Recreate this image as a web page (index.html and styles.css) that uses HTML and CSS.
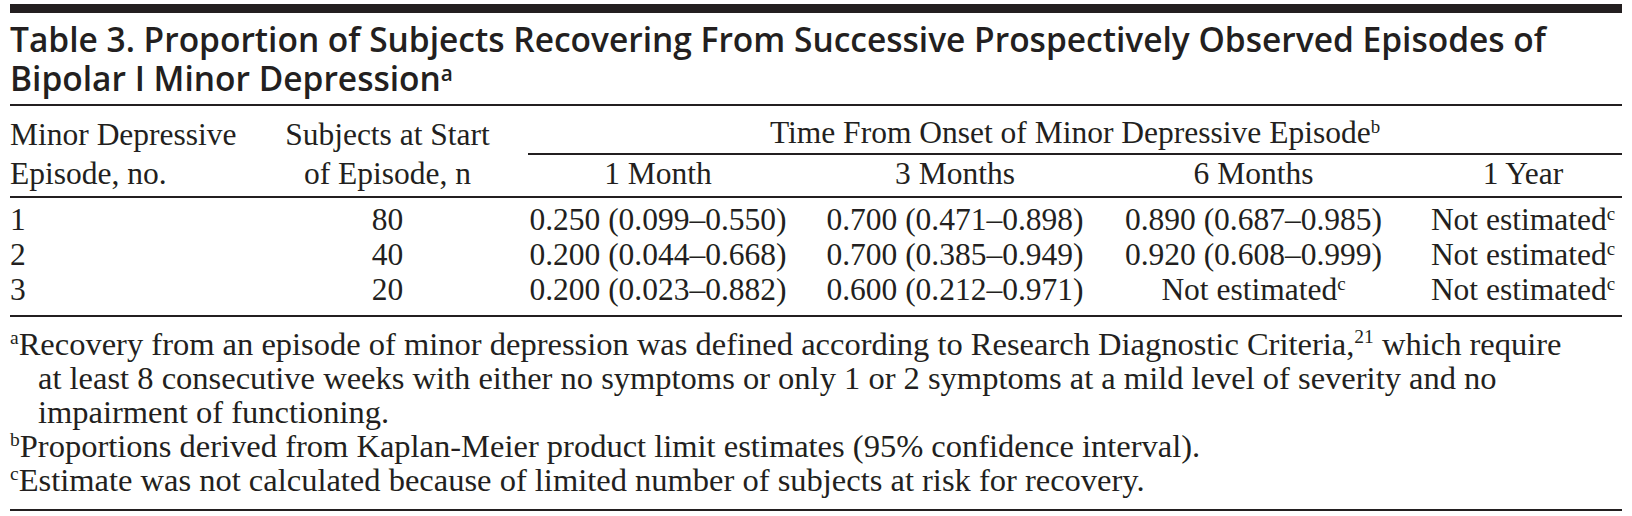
FILE: index.html
```html
<!DOCTYPE html>
<html lang="en">
<head>
<meta charset="utf-8">
<title>Table 3</title>
<link rel="stylesheet" href="styles.css">
</head>
<body>
<div class="page">
  <div class="topbar"></div>
  <h1 class="title">Table 3. Proportion of Subjects Recovering From Successive Prospectively Observed Episodes of<br>Bipolar I Minor Depression<sup class="tsup">a</sup></h1>
  <table class="data">
    <colgroup>
      <col class="w1"><col class="w2"><col class="w3"><col class="w4"><col class="w5"><col class="w6">
    </colgroup>
    <thead>
      <tr>
        <th rowspan="2" class="left hdr2">Minor Depressive<br>Episode, no.</th>
        <th rowspan="2" class="hdr2">Subjects at Start<br>of Episode, n</th>
        <th colspan="4" class="spancell"><div class="spanner">Time From Onset of Minor Depressive Episode<sup class="sup">b</sup></div></th>
      </tr>
      <tr class="sub">
        <th>1 Month</th>
        <th>3 Months</th>
        <th>6 Months</th>
        <th class="last">1 Year</th>
      </tr>
    </thead>
    <tbody>
      <tr class="first">
        <td class="left">1</td><td>80</td><td>0.250 (0.099–0.550)</td><td>0.700 (0.471–0.898)</td><td>0.890 (0.687–0.985)</td><td class="last">Not estimated<sup class="sup">c</sup></td>
      </tr>
      <tr>
        <td class="left">2</td><td>40</td><td>0.200 (0.044–0.668)</td><td>0.700 (0.385–0.949)</td><td>0.920 (0.608–0.999)</td><td class="last">Not estimated<sup class="sup">c</sup></td>
      </tr>
      <tr class="final">
        <td class="left">3</td><td>20</td><td>0.200 (0.023–0.882)</td><td>0.600 (0.212–0.971)</td><td>Not estimated<sup class="sup">c</sup></td><td class="last">Not estimated<sup class="sup">c</sup></td>
      </tr>
    </tbody>
  </table>
  <div class="notes">
    <p class="note"><sup class="nsup">a</sup>Recovery from an episode of minor depression was defined according to Research Diagnostic Criteria,<sup class="ref">21</sup> which require<br>at least 8 consecutive weeks with either no symptoms or only 1 or 2 symptoms at a mild level of severity and no<br>impairment of functioning.</p>
    <p class="note"><sup class="nsup">b</sup>Proportions derived from Kaplan-Meier product limit estimates (95% confidence interval).</p>
    <p class="note"><sup class="nsup">c</sup>Estimate was not calculated because of limited number of subjects at risk for recovery.</p>
  </div>
</div>
</body>
</html>
```

FILE: styles.css
```css
html, body {
  margin: 0;
  padding: 0;
  background: #ffffff;
}

.page {
  width: 1612px;
  margin-left: 10px;
  color: #231f20;
  font-family: "Liberation Serif", "Times New Roman", serif;
}

.topbar {
  margin-top: 4px;
  height: 9px;
  background: #231f20;
}

.title {
  margin: 0;
  padding: 7px 0 7px 0;
  font-family: "Open Sans", "Noto Sans", sans-serif;
  font-weight: 600;
  font-size: 33.5px;
  line-height: 38.5px;
  border-bottom: 2px solid #231f20;
}

.tsup {
  font-size: 0.62em;
  line-height: 0;
  vertical-align: 0.5em;
}

.data {
  width: 1612px;
  table-layout: fixed;
  border-collapse: collapse;
  font-size: 31.5px;
}

.w1 { width: 255px; }
.w2 { width: 245px; }
.w3 { width: 296px; }
.w4 { width: 298px; }
.w5 { width: 299px; }
.w6 { width: 219px; }

.data th {
  font-weight: normal;
  text-align: center;
  padding: 0;
}

.data th.left,
.data td.left {
  text-align: left;
}

.hdr2 {
  line-height: 39px;
  vertical-align: bottom;
  padding: 9px 0 3px 0 !important;
  border-bottom: 2px solid #231f20;
}

.spancell {
  padding: 0 0 0 18px !important;
  vertical-align: top;
}

.spanner {
  line-height: 41px;
  padding-top: 6px;
  border-bottom: 2px solid #231f20;
}

.sub th {
  line-height: 38px;
  vertical-align: bottom;
  padding: 0 0 3px 0;
  border-bottom: 2px solid #231f20;
}

.data th.last,
.data td.last {
  padding-left: 21px;
}

.data td {
  text-align: center;
  line-height: 35px;
  padding: 0;
  white-space: nowrap;
}

.data tr.first td {
  padding-top: 4px;
}

.data tr.final td {
  padding-bottom: 8px;
  border-bottom: 2px solid #231f20;
}

.sup {
  font-size: 0.6em;
  line-height: 0;
  vertical-align: 0.55em;
}

.notes {
  padding: 10px 0 12px 0;
  border-bottom: 2px solid #231f20;
  font-size: 32.5px;
  line-height: 34px;
}

.note {
  margin: 0;
  padding-left: 28px;
  text-indent: -28px;
}

.nsup {
  font-size: 0.6em;
  line-height: 0;
  vertical-align: 0.55em;
}

.ref {
  font-size: 0.6em;
  line-height: 0;
  vertical-align: 0.6em;
}
```
